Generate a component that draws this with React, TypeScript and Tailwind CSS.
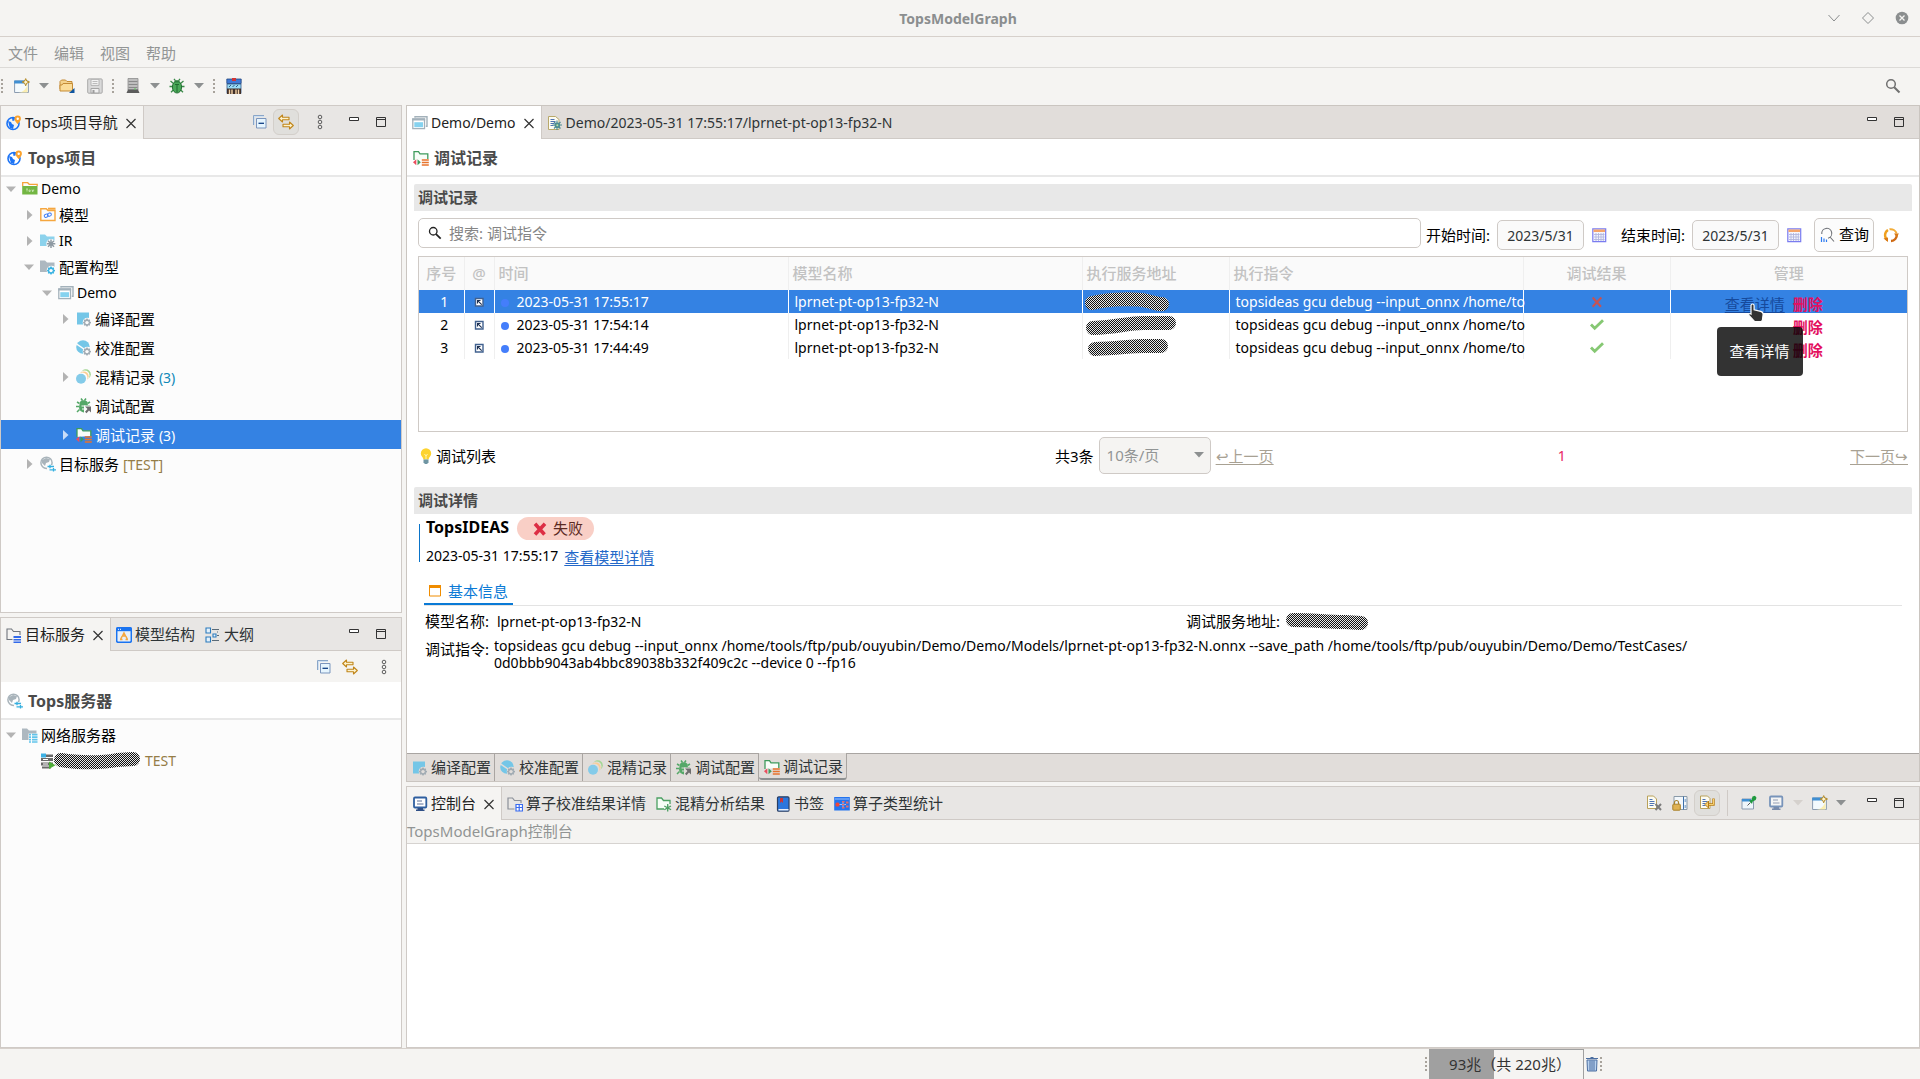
import type { ReactNode } from 'react';
import clsx from 'clsx';

type IconProps = { children?: ReactNode; className?: string };

function Icon({ children, className = 'w-4 h-4' }: IconProps) {
  return (
    <svg viewBox="0 0 16 16" fill="none" className={clsx('shrink-0', className)} aria-hidden="true">
      {children}
    </svg>
  );
}

/* ---------- small shared glyphs ---------- */

const gearPath =
  'M11 6.6l.5 1.2 1.2-.5.9.9-.5 1.2 1.3.5v1.3l-1.3.5.5 1.2-.9.9-1.2-.5-.5 1.2h-1.2l-.5-1.2-1.2.5-.9-.9.5-1.2-1.2-.5V9.900l1.200-.5-.5-1.200.9-.9 1.200.5.5-1.200z';

const Gear = ({ color, hole = '#fcfcfc' }: { color: string; hole?: string }) => (
  <g>
    <path d={gearPath} fill={color} transform="translate(0.6 1)" />
    <circle cx="11" cy="11.600" r="1.700" fill={hole} />
  </g>
);

const GlobeIcon = () => (
  <Icon>
    <circle cx="7" cy="8.500" r="6" stroke="#1d74f5" strokeWidth="1.600" />
    <path d="M2 6l3 1 1 2 2 1-1 4-3-1-1-3zM6 3l3-.5-.5 3L6.500 6z" fill="#1d74f5" />
    <path d="M11.700 0.500a3.200 3.200 0 0 1 3.200 3.200c0 2.300-3.200 5.300-3.200 5.300S8.500 6 8.500 3.700a3.200 3.200 0 0 1 3.200-3.200z" fill="#fba22c" />
    <circle cx="11.700" cy="3.700" r="1.200" fill="#fff" />
  </Icon>
);

const GlobeLinkIcon = () => (
  <Icon>
    <circle cx="6.500" cy="6.800" r="5.600" stroke="#a9b4bb" strokeWidth="1.500" />
    <path d="M2 4l4-2 4 1-1 3-3 1-1 3-3-3z" fill="#a9b4bb" />
    <path d="M7 9h9v7H7z" fill="#fcfcfc" />
    <path d="M7.500 10.500H14M10 8.800v3.400M9.500 13.800H16M13.500 12v3.600" stroke="#35b0e0" strokeWidth="1.300" />
  </Icon>
);

const TopsFolderIcon = () => (
  <Icon>
    <path d="M.7 5V1.700h5l1.500 1.600h8V5" stroke="#f5a33a" strokeWidth="1.300" />
    <path d="M.2 5h15.300v8.500H.2z" fill="#73b643" />
    <path d="M4 8h2M5 8v2.500M7 9h1.200v1.500H7zM9.500 9h1v2M12.200 9h-1v1.500" stroke="#d6ecc6" strokeWidth=".7" />
  </Icon>
);

const ModelFolderIcon = () => (
  <Icon>
    <path d="M.8 13.500V1.700h5.500L8 3.500h7V13.500z" stroke="#f5a63e" strokeWidth="1.400" />
    <path d="M8 .7h7.500v2H8z" fill="#f5a63e" />
    <rect x="4.300" y="7.300" width="4" height="3" rx="1.500" stroke="#3f7df5" transform="rotate(-20 6 9)" />
    <rect x="7.500" y="6.300" width="4" height="3" rx="1.500" stroke="#3f7df5" transform="rotate(-20 9 8)" />
  </Icon>
);

const IrFolderIcon = () => (
  <Icon>
    <path d="M0 1.500h5l2 2h7.500V13H0z" fill="#8cd2ec" />
    <circle cx="11" cy="10.800" r="4.800" fill="#fcfcfc" />
    <path d="M11 6.500v8.600M6.800 10.800h8.500M8 7.800l6 6M14 7.800l-6 6" stroke="#8f9aa3" strokeWidth="1.500" />
  </Icon>
);

const ConfigFolderIcon = () => (
  <Icon>
    <path d="M0 1.500h5l2 2h7.500V13H0z" fill="#adb8c0" />
    <circle cx="11.500" cy="11.500" r="4.800" fill="#fcfcfc" />
    <Gear color="#3ab3e2" />
  </Icon>
);

const WindowsIcon = () => (
  <Icon>
    <path d="M3 2.800V1.800h12v9.500h-1.200" stroke="#a3b1ba" strokeWidth="1.400" />
    <path d="M.8 4h11.700v9.700H.8z" fill="#fff" stroke="#a3b1ba" strokeWidth="1.300" />
    <path d="M.2 3.500h13v2H.2z" fill="#a3b1ba" />
    <path d="M2.300 7.200h8.700v5H2.300z" fill="#85d2ef" />
  </Icon>
);

const CompileIcon = ({ halo = '#fcfcfc' }: { halo?: string }) => (
  <Icon>
    <path d="M1 1.500h12v12H1z" fill="#74c6e7" />
    <circle cx="11.500" cy="11.500" r="4.800" fill={halo} />
    <Gear color="#a0abb3" hole={halo} />
  </Icon>
);

const CalibIcon = ({ halo = '#fcfcfc' }: { halo?: string }) => (
  <Icon>
    <circle cx="7" cy="7" r="6.800" fill="#74c6e7" />
    <path d="M0 3.500l13 9" stroke={halo} strokeWidth="1.500" />
    <circle cx="11.500" cy="11.500" r="4.800" fill={halo} />
    <Gear color="#a0abb3" hole={halo} />
  </Icon>
);

const MixIcon = ({ halo = '#fcfcfc' }: { halo?: string }) => (
  <Icon>
    <circle cx="9.800" cy="5.200" r="5" fill="#a3d694" />
    <circle cx="8.500" cy="6.400" r="5" fill={halo} />
    <circle cx="7.800" cy="7.200" r="4.800" fill="#fbcd92" />
    <circle cx="6.300" cy="8.800" r="5.200" fill={halo} />
    <circle cx="5" cy="9.800" r="5" fill="#84cbe9" />
  </Icon>
);

const DebugIcon = ({ halo = '#fcfcfc' }: { halo?: string }) => (
  <Icon>
    <path d="M5 .5l1.500 2M10 .5L8.500 2.500M1 4l2.500 1.500M14 4l-2.500 1.500M0 8.500h3M1 14l2.500-2.500M12 8h2" stroke="#55a868" strokeWidth="1.500" />
    <path d="M4 4c1-2.500 6-2.500 7.500 0L12 8v2l-3 4.500C5 14.500 3 12 3 9z" fill="#55a868" />
    <path d="M5.500 8h4M6 11h3" stroke={halo} />
    <path d="M8 7.500h8V16H8z" fill={halo} />
    <path d="M9 8.500h6v6l-2-2-2.500 2.800-1.500-1.500 2.500-2.800z" fill="#6e6e6e" />
  </Icon>
);

const RecordIcon = () => (
  <Icon>
    <path d="M1 10V1.700h4.500L7 3.800h7.800V9z" fill="#f8fdf8" />
    <path d="M1 10V1.700h4.500L7 3.800h7.800V9" stroke="#3f9b5c" strokeWidth="1.300" />
    <path d="M0 12.300l3.300-3v6z" fill="#ea4d5e" />
    <path d="M4.500 9.300l3.300 3-3.300 3z" fill="#3f9b5c" />
    <path d="M8.800 10h7M8.800 12.500h7M8.800 15h7" stroke="#e8732c" strokeWidth="1.300" />
  </Icon>
);

const ServerFolderIcon = () => (
  <Icon>
    <path d="M0 1.500h5l2 2h7.500V13H0z" fill="#adb8c0" />
    <path d="M6.500 6.500H16V16H6.500z" fill="#fcfcfc" />
    <path d="M7 7.700h2m1 0h5.500M7 10.200h2m1 0h5.500M7 12.700h2m1 0h5.500M7 15h2m1 0h5.500" stroke="#62c3ea" strokeWidth="1.700" />
  </Icon>
);

const RunningServerIcon = () => (
  <Icon>
    <path d="M1 5h12v3H1zM1 9.500h12v3H1zM2 13.500h9v2H2zM6 1.500h7V4H6z" fill="#6a6a6a" />
    <path d="M3 6.500h5M3 11h5" stroke="#fff" />
    <path d="M1 .5h5v4H1z" fill="#3db1e4" />
    <path d="M9 8.500l6.500 3.800L9 16z" fill="#4fae3a" />
  </Icon>
);

const TargetTabIcon = () => (
  <Icon>
    <path d="M6.500 12.500H1V2h4.500l2 2.500H14V8" stroke="#70757d" strokeWidth="1.100" />
    <path d="M7.500 9H15v2H7.500zM7.500 12H15v1.500H7.500zM7.500 14.500H15V16H7.500z" fill="#3269ea" />
  </Icon>
);

const ModelTabIcon = () => (
  <Icon>
    <rect x=".7" y=".7" width="14.600" height="14.600" rx="1.500" fill="#e8f0fa" stroke="#1a73f0" strokeWidth="1.500" />
    <path d="M.5.5h15v3.700H.5z" fill="#1a73f0" />
    <path d="M2 2.300h1M4 2.300h1" stroke="#fff" />
    <path d="M8 6l1.500 3h-3zM4.500 12.500l1.500-3M11.500 12.500l-1.500-3M4 12.500h2.500M9.500 12.500H12" stroke="#f5a63e" strokeWidth="1.500" />
  </Icon>
);

const OutlineIcon = () => (
  <Icon>
    <path d="M1 1h4.500v5H1zM1 10h4.500v5H1zM8 7h3v3H8z" fill="#e4f1fb" stroke="#2b7bbd" strokeWidth="1.100" />
    <path d="M7 2.500h7M12 8.500h2M7 13.500h7M12 5h1" stroke="#5a6b78" />
  </Icon>
);

const CollapseIcon = () => (
  <Icon>
    <path d="M1.500 11V1.500H12" stroke="#8aa6c8" />
    <path d="M2 2h10v1H3v8H2z" fill="#cfe0f2" />
    <path d="M4.500 4.500h9.500v9.500H4.500z" fill="#e6f5fe" stroke="#7b95bd" />
    <path d="M6.500 9.300h5.500" stroke="#0f3f85" strokeWidth="1.300" />
  </Icon>
);

const LinkArrowsIcon = () => (
  <Icon>
    <path d="M4.500 1L.7 4.500l3.800 3.500V5.800h6.500V3.200H4.500z" fill="#fdf2cd" stroke="#c08519" strokeWidth="1.100" strokeLinejoin="round" />
    <path d="M11.500 8l3.800 3.500-3.800 3.500v-2.200H5V10.200h6.500z" fill="#fdf2cd" stroke="#c08519" strokeWidth="1.100" strokeLinejoin="round" />
  </Icon>
);

const ViewMenuIcon = () => (
  <Icon>
    <g stroke="#5c5c5c">
      <circle cx="8" cy="3" r="1.800" />
      <circle cx="8" cy="8" r="1.800" />
      <circle cx="8" cy="13" r="1.800" />
    </g>
  </Icon>
);

const MinimizeIcon = () => (
  <Icon>
    <path d="M3.500 3.500h9v3h-9z" fill="#fff" stroke="#333" />
  </Icon>
);

const MaximizeIcon = () => (
  <Icon>
    <path d="M3.500 3.500h9v9h-9zM3.500 5.500h9" stroke="#333" />
  </Icon>
);

const CloseX = () => (
  <Icon>
    <path d="M3.500 4l9 9M12.500 4l-9 9" stroke="#333" strokeWidth="1.200" />
  </Icon>
);

const NewWindowIcon = () => (
  <Icon>
    <path d="M.6 3h13.800v11.500H.6z" fill="#f4fafd" stroke="#8a9bb0" />
    <path d="M.2 2.500h12v3H.2z" fill="#3f8fd2" />
    <path d="M13.500 6v8.500H4c5 0 8-3 9.500-8.500z" fill="#fbeeb0" />
    <path d="M11.700.6l1 2.400 2.800 1-2.800 1.200-1 2.600-1-2.600-2.500-1.200 2.500-1z" fill="#fff6d0" stroke="#b48a26" />
  </Icon>
);

const OpenFolderIcon = () => (
  <Icon>
    <path d="M1 11V3.500L2.500 2h4L8 3.500h5V12" fill="#f4d28c" stroke="#c48b35" />
    <path d="M1 13V7h2l1-1.500h9.500V13z" fill="#fbdc98" stroke="#c48b35" strokeLinejoin="round" />
    <path d="M15.500 10V15h-5.500z" fill="#0f55a0" />
  </Icon>
);

const SaveIcon = () => (
  <Icon>
    <rect x=".7" y=".9" width="14.500" height="14.300" rx="1" fill="#d9d9d9" stroke="#a9a9a9" />
    <path d="M4 1.400h8v6H4z" fill="#f3f3f3" stroke="#b4b4b4" />
    <path d="M5.500 3.500h5M5.500 5.500h5" stroke="#bcbcbc" />
    <path d="M4 10.500h8V15H4z" fill="#f0f0f0" stroke="#a4a4a4" />
    <path d="M5.500 12h2v3h-2z" fill="#9d9d9d" />
  </Icon>
);

const ServerIcon = () => (
  <Icon>
    <path d="M3 .5h10V12H3z" fill="#bdbdbd" stroke="#8e8e8e" strokeWidth=".8" />
    <path d="M3.500 3.500h9M3.500 6.500h9M3.500 9.500h9" stroke="#8a8a8a" />
    <path d="M3 11.500h10l1.500 3.500h-13z" fill="#5c5c5c" />
    <path d="M9 10.500h2v1H9z" fill="#5cc95c" />
  </Icon>
);

const BugIcon = () => (
  <Icon>
    <path d="M5 .8l1.500 2M11 .8L9.500 2.800M1.500 3l3 2.500M14.500 3l-3 2.500M.5 8.500h3.500M15.500 8.500H12M2 14.200l3-3M14 14.200l-3-3" stroke="#3b8a49" strokeWidth="1.300" />
    <ellipse cx="8" cy="9" rx="4.600" ry="6" fill="#49a858" stroke="#256f35" />
    <path d="M5 4.500c1-3 5-3 6 0z" fill="#2e7f3e" />
    <path d="M8 7v7M6 6.500h4" stroke="#1f6a2f" />
  </Icon>
);

const ShopIcon = () => (
  <Icon>
    <path d="M1 6h14v9.500H1z" fill="#9adcf5" stroke="#31588a" strokeWidth=".8" />
    <path d="M.8 1h14.400v4.500H.8z" fill="#3f79d6" stroke="#24477f" strokeWidth=".8" />
    <path d="M6 0h4v3H6z" fill="#d03535" />
    <path d="M3 9l2-2M6.500 9l2-2M10 9l2-2" stroke="#2d5f8a" />
    <path d="M1 10.500h14V16H1z" fill="#40302a" />
    <path d="M3.500 11.500V16M6 11.500V16M10 11.500V16M12.500 11.500V16" stroke="#f6d3a8" strokeWidth="1.400" />
  </Icon>
);

const MagnifierIcon = ({ className }: { className?: string }) => (
  <Icon className={className}>
    <circle cx="6" cy="6" r="4.300" stroke="currentColor" strokeWidth="1.500" />
    <path d="M9.200 9.200l5.300 5.300" stroke="currentColor" strokeWidth="2" />
  </Icon>
);

const DocGearIcon = () => (
  <Icon>
    <path d="M1.500 1.500h7l3.500 3v10h-10.500z" fill="#fdfcf2" stroke="#b9a96b" />
    <path d="M3.500 4.500h4M3.500 6.500h5M3.500 8.500h4M3.500 10.500h3" stroke="#4f74b3" />
    <path d="M10 5.500v9.500M5.500 10h9.500M7 7l6.500 6.500M13.500 7L7 13.500" stroke="#4f8d92" strokeWidth="1.200" />
    <circle cx="10.300" cy="10.200" r="2.800" fill="#4f8d92" />
    <circle cx="10.300" cy="10.200" r="1" fill="#b6e3a0" />
  </Icon>
);

const CalendarIcon = () => (
  <Icon>
    <path d="M1.800 1.800h12.900v12.900H1.800z" fill="#f5f6ff" stroke="#7a7cf0" strokeWidth="1.200" />
    <path d="M2.500 2.500h11.500V5H2.500z" fill="#f6a56a" />
    <path d="M3 7.500h10.500M3 10h10.500M3 12.500h10.500M5 6v8M7.500 6v8M10 6v8M12.300 6v8" stroke="#b3b7de" strokeWidth=".9" />
  </Icon>
);

const QueryIcon = () => (
  <Icon>
    <path d="M2.800 7A5 5 0 1 1 9 11.200M11 10l4 4.500" stroke="#6d7076" strokeWidth="1.100" />
    <path d="M2.500 10v5M5 11.500V15M7.500 12.500V15" stroke="#2e7bf0" strokeWidth="1.200" />
  </Icon>
);

const RefreshIcon = () => (
  <Icon>
    <path d="M4.500 13A6 6 0 0 1 5 3" stroke="#f0a01e" strokeWidth="2.400" />
    <path d="M6.500 2.300A6 6 0 0 1 13.600 6.500" stroke="#f2ad3a" strokeWidth="2" />
    <path d="M13.800 7.500A6 6 0 0 1 8 14" stroke="#cf6a14" strokeWidth="2.400" />
    <path d="M11 6.500h5L13.600 10zM.5 11.500L5 10.500v4.500z" fill="#d97a16" />
  </Icon>
);

const PinMarkIcon = () => (
  <Icon className="mx-auto h-4 w-4">
    <path d="M4.500 4.500h7.500v7.500H4.500z" fill="#fff" stroke="#41618f" strokeWidth="1.400" />
    <path d="M6.500 9.500V6.500h3M6.700 6.700l4 4" stroke="#1c2f50" strokeWidth="1.100" />
  </Icon>
);

const BulbIcon = () => (
  <Icon>
    <path d="M8 .3a5.200 5.200 0 0 1 5.200 5.200c0 2.500-2.200 3.500-2.700 6h-5c-.5-2.500-2.700-3.500-2.700-6A5.200 5.200 0 0 1 8 .3z" fill="#fdd32f" />
    <path d="M6.500 6l1.500 2 1.500-2M8 8v3.500" stroke="#fff3b0" />
    <path d="M5.500 11.500h5v3L9 16H7l-1.500-1.500z" fill="#6f95a3" />
  </Icon>
);

const CrossIcon = ({ color, className, weight = 2.4 }: { color: string; className?: string; weight?: number }) => (
  <Icon className={className}>
    <path d="M3 2.800l9.500 10.700M13 2.800L3 13.500" stroke={color} strokeWidth={weight} />
  </Icon>
);

const CheckIcon = () => (
  <Icon className="mx-auto h-4 w-4">
    <path d="M2 7.500l3.700 3.800L14 3.300" stroke="#86c873" strokeWidth="2.800" />
  </Icon>
);

const InfoWindowIcon = () => (
  <Icon>
    <path d="M2.500 2.500h11v10.500h-11z" stroke="#f08c00" />
    <path d="M2 2h12v3H2z" fill="#f08c00" />
  </Icon>
);

const ConsoleIcon = ({ faded = false }: { faded?: boolean }) => (
  <Icon className={faded ? 'h-4 w-4 opacity-60' : 'h-4 w-4'}>
    <rect x="2" y="1.500" width="12.300" height="10" rx="1" fill="#fff" stroke="#2f5f9f" strokeWidth="1.800" />
    <path d="M5 5h5M5 8h6.500" stroke="#5a6f96" />
    <path d="M5.500 12h5.500v1.500h1.500V15H4v-1.500h1.500z" fill="#2f4f86" />
  </Icon>
);

const ResultFolderIcon = () => (
  <Icon>
    <path d="M7.500 13H1V2h4.500l2 2.500H14V7" stroke="#8a8f98" strokeWidth="1.200" />
    <path d="M9 8.500h6.500V15H9zM9 11.500h6.500M12.200 8.500V15" fill="#fff" stroke="#3a6cf0" strokeWidth="1.200" />
  </Icon>
);

const AnalysisFolderIcon = () => (
  <Icon>
    <path d="M8 13H1V2h4.500l2 2.500H14V8" fill="#f5fdf6" stroke="#4ba062" strokeWidth="1.300" />
    <path d="M11.700 8v7.500M8.300 10l6.800 3.700M15 10l-6.700 3.700" stroke="#4ba062" strokeWidth="1.300" />
  </Icon>
);

const BookmarkIcon = () => (
  <Icon>
    <rect x="2.500" y=".8" width="11.500" height="14.400" rx="1.300" fill="#2b76dc" stroke="#2b3f63" strokeWidth="1.200" />
    <path d="M3.500 13h10v1.500h-10z" fill="#e9eef5" />
    <path d="M5 2h3v5L6.500 5.500 5 7z" fill="#c93737" />
  </Icon>
);

const StatsIcon = () => (
  <Icon>
    <path d="M.2 1h15.600v13.500H.2z" fill="#2474ee" />
    <path d="M1 3h14" stroke="#bcd7ff" strokeWidth=".8" />
    <path d="M5 8.500h7M9 5.500v6" stroke="#bcd7ff" strokeWidth=".8" />
    <rect x="1.500" y="6.500" width="4" height="4" rx="1.500" fill="#f04438" />
    <path d="M8 5h2.500v1.500H8zM12 5.500h2.500v2H12zM8 8h2.500v1.500H8zM12 9.500h2.500v2H12zM8 11h2.500v1.500H8z" fill="#e86a66" />
  </Icon>
);

const ClearConsoleIcon = () => (
  <Icon>
    <path d="M1.500 1h6l3 3v9.500h-9z" fill="#fdfcf2" stroke="#b9a15a" />
    <path d="M3.500 4.500h3M3.500 6.500h5M3.500 8.500h5M3.500 10.500h4" stroke="#4f74b3" />
    <path d="M9.500 9l5.500 6M15 9l-5.500 6" stroke="#7c7c7c" strokeWidth="2" />
  </Icon>
);

const LockIcon = () => (
  <Icon>
    <path d="M2 1.500h13v13H2z" fill="#f2f7fb" stroke="#8a9aa8" />
    <path d="M11.500 1.500v13" stroke="#3b6ea8" />
    <path d="M12.500 4h2v3h-2zM12.500 10h2v3h-2z" fill="#9ab7d5" />
    <path d="M2.500 9.500V7.500a2 2 0 0 1 4 0v2" stroke="#a8812b" strokeWidth="1.200" />
    <rect x=".8" y="9.200" width="7.500" height="6" rx=".8" fill="#e0b252" stroke="#a8812b" />
  </Icon>
);

const WrapIcon = () => (
  <Icon>
    <path d="M1.500 1h7l2.500 2.500v10h-9.500z" fill="#fdfcf2" stroke="#b9a15a" />
    <path d="M3.500 4.500h3M3.500 6.500h5M3.500 8.500h3M3.500 10.500h3" stroke="#4f74b3" />
    <path d="M14.500 3.500v6H9" stroke="#b87d13" strokeWidth="2.400" />
    <path d="M14.500 4v5.500H9" stroke="#f7d071" />
    <path d="M9.500 6v7L6 9.500z" fill="#f7d071" stroke="#b87d13" />
  </Icon>
);

const PinConsoleIcon = () => (
  <Icon>
    <path d="M1 4h11.500v10H1z" fill="#eef6fb" stroke="#8a9bb0" />
    <path d="M1 4h9v2.500H1z" fill="#3f8fd2" />
    <path d="M6.500 10.500l3-3" stroke="#555" />
    <path d="M8 5.500l2.500-.5 1-3.500L14 .8l1.500 2-.8 2.200-3 1.500-.7 2.500z" fill="#1f9a3e" />
  </Icon>
);

const TrashIcon = () => (
  <Icon>
    <path d="M2 2.500h12M6.500 1.500h3" stroke="#4a6da0" strokeWidth="1.200" />
    <path d="M3 4h10l-.5 11h-9z" fill="#b9d2ef" stroke="#4a6da0" />
    <path d="M6 4.500v10M8 4.500v10M10 4.500v10" stroke="#4a6da0" />
  </Icon>
);

const HandCursor = () => (
  <svg viewBox="0 0 18 20" className="pointer-events-none absolute left-[76px] top-[12px] z-20 h-5 w-[18px]" aria-hidden="true">
    <path
      d="M5.500 1c1.200 0 1.600.8 1.600 1.800v4l6.500 1.500c1.800.5 2.700 1.500 2.500 3.200l-.7 5.500-1 1.500H7.500L2 12.500c-1-1.200.5-2.600 2-1.500V2.800C4 1.800 4.300 1 5.500 1z"
      fill="#333"
      stroke="#fff"
      strokeWidth="1.200"
    />
  </svg>
);

const Caret = ({ light = false }: { light?: boolean }) => (
  <svg viewBox="0 0 10 6" className="h-[6px] w-[10px] shrink-0" aria-hidden="true">
    <path d="M0 0h10L5 5.500z" fill={light ? '#d5d1cd' : '#8d9091'} />
  </svg>
);

const Grip = () => (
  <svg viewBox="0 0 2 14" className="h-[14px] w-[2px] shrink-0" aria-hidden="true">
    <path d="M1 0v14" stroke="#a8a39c" strokeWidth="2" strokeDasharray="2 2" />
  </svg>
);

/* Hidden addresses are scribbled over with a checkered brush stroke */
function Scribble({ d, width }: { d: string; width: number }) {
  return (
    <svg width={width} height="22" viewBox={`0 0 ${width} 22`} className="shrink-0" aria-hidden="true">
      <path d={d} fill="none" stroke="url(#checker)" strokeWidth="14" strokeLinecap="round" strokeLinejoin="round" />
    </svg>
  );
}

function ToolButton({ label, children, className }: { label: string; children: ReactNode; className?: string }) {
  return (
    <button type="button" aria-label={label} title={label} className={clsx('flex shrink-0 items-center justify-center', className)}>
      {children}
    </button>
  );
}

function PaneControls() {
  return (
    <div className="ml-[18px] mr-3 flex gap-[11px]">
      <ToolButton label="最小化">
        <MinimizeIcon />
      </ToolButton>
      <ToolButton label="最大化">
        <MaximizeIcon />
      </ToolButton>
    </div>
  );
}

type TabProps = { icon: ReactNode; label: string; active?: boolean; latin?: boolean; activeBg?: string };

function Tab({ icon, label, active = false, latin = false, activeBg = 'bg-[#f5f4f2]' }: TabProps) {
  return (
    <div
      className={clsx(
        'flex shrink-0 items-center pl-[5px]',
        active ? clsx('h-[33px] border-r border-[#cfcac6] pr-1', activeBg) : 'h-[33px] pr-[5px]',
      )}
    >
      <button
        type="button"
        className={clsx('flex items-center gap-[3px] whitespace-nowrap', latin ? 'text-[14px]' : 'text-[15px]', active ? 'text-[#222]' : 'text-[#2e3436]')}
      >
        {icon}
        {label}
      </button>
      {active && (
        <ToolButton label="关闭" className="ml-[5px]">
          <CloseX />
        </ToolButton>
      )}
    </div>
  );
}

function TabStrip({ children, tools, dark = false }: { children: ReactNode; tools?: ReactNode; dark?: boolean }) {
  return (
    <div className={clsx('flex h-[33px] shrink-0', dark ? 'bg-[#e1ddda]' : 'bg-[#e8e6e4]')}>
      <div className="flex flex-1 border-b border-[#cfcac6]">
        <div className="-mb-px flex">{children}</div>
        <div className="flex flex-1 items-center justify-end">
          {tools}
          <PaneControls />
        </div>
      </div>
    </div>
  );
}

function ViewTitle({ icon, children }: { icon: ReactNode; children: ReactNode }) {
  return (
    <div className="flex h-[38px] shrink-0 items-center gap-[5px] border-b-2 border-[#e8e8e8] bg-white pl-[6px] pt-[2px] text-[16px] font-bold text-[#4a4a4a]">
      {icon}
      <h2>{children}</h2>
    </div>
  );
}

/* ---------- left side ---------- */

type Node = {
  icon: ReactNode;
  label: ReactNode;
  indent: string;
  state?: 'open' | 'closed';
  latin?: boolean;
  selected?: boolean;
};

function TreeRow({ node }: { node: Node }) {
  return (
    <li
      className={clsx(
        'flex items-center',
        node.indent,
        node.latin ? 'h-[23px] text-[14px]' : 'h-[29px] pt-px text-[15px]',
        node.selected ? 'bg-[#3482e3] text-white' : 'text-black',
      )}
    >
      <svg viewBox="0 0 12 12" className={clsx('mr-[5px] h-3 w-3 shrink-0', node.selected ? 'text-[#c9ddf8]' : 'text-[#b3b3b3]')} aria-hidden="true">
        {node.state === 'open' && <path d="M1 3.500h10L6 9z" fill="currentColor" />}
        {node.state === 'closed' && <path d="M4 1l5.500 5L4 11z" fill="currentColor" />}
      </svg>
      {node.icon}
      <span className="ml-[3px] whitespace-pre">{node.label}</span>
    </li>
  );
}

const projectTree: Node[] = [
  { icon: <TopsFolderIcon />, label: 'Demo', indent: 'pl-1', state: 'open', latin: true },
  { icon: <ModelFolderIcon />, label: '模型', indent: 'pl-[22px]', state: 'closed' },
  { icon: <IrFolderIcon />, label: 'IR', indent: 'pl-[22px]', state: 'closed', latin: true },
  { icon: <ConfigFolderIcon />, label: '配置构型', indent: 'pl-[22px]', state: 'open' },
  { icon: <WindowsIcon />, label: 'Demo', indent: 'pl-10', state: 'open', latin: true },
  { icon: <CompileIcon />, label: '编译配置', indent: 'pl-[58px]', state: 'closed' },
  { icon: <CalibIcon />, label: '校准配置', indent: 'pl-[58px]' },
  {
    icon: <MixIcon />,
    label: (
      <>
        混精记录 <span className="text-[14px] text-[#0f88b8]">(3)</span>
      </>
    ),
    indent: 'pl-[58px]',
    state: 'closed',
  },
  { icon: <DebugIcon />, label: '调试配置', indent: 'pl-[58px]' },
  {
    icon: <RecordIcon />,
    label: (
      <>
        调试记录 <span className="text-[14px]">(3)</span>
      </>
    ),
    indent: 'pl-[58px]',
    state: 'closed',
    selected: true,
  },
  {
    icon: <GlobeLinkIcon />,
    label: (
      <>
        目标服务 <span className="text-[14px] text-[#957d47]">[TEST]</span>
      </>
    ),
    indent: 'pl-[22px]',
    state: 'closed',
  },
];

function ProjectPane() {
  return (
    <section className="flex flex-col border border-[#cfcac6] bg-[#fcfcfc]">
      <TabStrip
        tools={
          <>
            <ToolButton label="全部折叠" className="mr-[5px]">
              <CollapseIcon />
            </ToolButton>
            <ToolButton label="与编辑器链接" className="mr-[13px] h-[26px] w-[26px] rounded-md border border-[#d3cfca] bg-[#e0dfdc]">
              <LinkArrowsIcon />
            </ToolButton>
            <ToolButton label="视图菜单">
              <ViewMenuIcon />
            </ToolButton>
          </>
        }
      >
        <Tab icon={<GlobeIcon />} label="Tops项目导航" active />
      </TabStrip>
      <ViewTitle icon={<GlobeIcon />}>Tops项目</ViewTitle>
      <ul>
        {projectTree.map((node, i) => (
          <TreeRow key={i} node={node} />
        ))}
      </ul>
    </section>
  );
}

function ServerPane() {
  return (
    <section className="flex flex-col border border-[#cfcac6] bg-[#fcfcfc]">
      <TabStrip>
        <Tab icon={<TargetTabIcon />} label="目标服务" active />
        <Tab icon={<ModelTabIcon />} label="模型结构" />
        <Tab icon={<OutlineIcon />} label="大纲" />
      </TabStrip>
      <div className="flex h-[31px] shrink-0 items-center justify-end bg-[#f5f4f2] pr-[9px]">
        <ToolButton label="全部折叠" className="mr-[10px]">
          <CollapseIcon />
        </ToolButton>
        <ToolButton label="与编辑器链接" className="mr-[18px]">
          <LinkArrowsIcon />
        </ToolButton>
        <ToolButton label="视图菜单">
          <ViewMenuIcon />
        </ToolButton>
      </div>
      <ViewTitle icon={<GlobeLinkIcon />}>Tops服务器</ViewTitle>
      <ul>
        <TreeRow node={{ icon: <ServerFolderIcon />, label: '网络服务器', indent: 'pl-1', state: 'open' }} />
        <TreeRow
          node={{
            icon: <RunningServerIcon />,
            label: (
              <span className="-ml-[6px] flex items-center gap-1">
                <Scribble width={88} d="M8 10C25 13 50 13 64 10L80 9" />
                <span className="text-[#957d47]">TEST</span>
              </span>
            ),
            indent: 'pl-[22px]',
            latin: true,
          }}
        />
      </ul>
    </section>
  );
}

/* ---------- debug record editor ---------- */

const records = [
  { no: 1, time: '2023-05-31 17:55:17', ok: false, mark: 'M9 12C30 7 55 8 64 10C73 12 76 14 79 13' },
  { no: 2, time: '2023-05-31 17:54:14', ok: true, mark: 'M10 14C35 13 45 9 60 9L86 9' },
  { no: 3, time: '2023-05-31 17:44:49', ok: true, mark: 'M12 12C35 11 50 9 60 9L78 9' },
];

const headers = [
  { label: '序号', align: 'text-center' },
  { label: '@', align: 'text-center' },
  { label: '时间', align: 'pl-1 text-left' },
  { label: '模型名称', align: 'pl-1 text-left' },
  { label: '执行服务地址', align: 'pl-1 text-left' },
  { label: '执行指令', align: 'pl-1 text-left' },
  { label: '调试结果', align: 'text-center' },
  { label: '管理', align: 'text-center' },
];

function RecordTable() {
  return (
    <div className="mx-[11px] mt-[5px] h-[176px] border border-[#cfcac6] bg-white">
      <table className="w-full table-fixed border-collapse">
        <colgroup>
          <col className="w-[45px]" />
          <col className="w-[30px]" />
          <col className="w-[294px]" />
          <col className="w-[294px]" />
          <col className="w-[147px]" />
          <col className="w-[294px]" />
          <col className="w-[147px]" />
          <col />
        </colgroup>
        <thead>
          <tr className="h-[33px] bg-[#fafafa] text-[15px] text-[#c2c2c2]">
            {headers.map((h) => (
              <th key={h.label} className={clsx('border-r border-[#efefef] p-0 font-medium last:border-r-0', h.align)}>
                {h.label}
              </th>
            ))}
          </tr>
        </thead>
        <tbody>
          {records.map((r) => {
            const selected = r.no === 1;
            const cell = clsx('border-r p-0', selected ? 'border-white' : 'border-[#efefef]');
            return (
              <tr key={r.no} className={clsx('h-[23px] text-[14px] leading-[22px]', selected ? 'bg-[#3482e3] text-white' : 'text-black')}>
                <td className={clsx(cell, 'pl-[6px] text-center')}>{r.no}</td>
                <td className={cell}>
                  <PinMarkIcon />
                </td>
                <td className={cell}>
                  <span className="ml-[6px] mr-2 inline-block h-2 w-2 rounded-full bg-[#447efb]" />
                  {r.time}
                </td>
                <td className={clsx(cell, 'pl-[6px]')}>lprnet-pt-op13-fp32-N</td>
                <td className={cell}>
                  <div className="h-[22px]">
                    <Scribble width={96} d={r.mark} />
                  </div>
                </td>
                <td className={clsx(cell, 'whitespace-nowrap pl-[6px]')}>topsideas gcu debug --input_onnx /home/to</td>
                <td className={cell}>{r.ok ? <CheckIcon /> : <CrossIcon color="#c65353" className="mx-auto h-[14px] w-[14px]" />}</td>
                <td className="p-0">
                  <div className="relative flex h-[22px] items-center justify-center pr-[30px] pt-1 text-[15px]">
                    <div className="flex w-[98px] justify-end gap-2">
                      {selected && (
                        <a href="#detail" className="whitespace-nowrap text-[#164a9c] underline underline-offset-2">
                          查看详情
                        </a>
                      )}
                      <a href="#delete" className="whitespace-nowrap font-bold text-[#e3105f]">
                        删除
                      </a>
                    </div>
                    {selected && (
                      <>
                        <HandCursor />
                        <div
                          role="tooltip"
                          className="absolute left-[46px] top-[36px] z-10 flex h-[49px] w-[86px] items-center justify-center rounded-[4px] bg-black/80 text-[15px] text-white"
                        >
                          查看详情
                        </div>
                      </>
                    )}
                  </div>
                </td>
              </tr>
            );
          })}
        </tbody>
      </table>
    </div>
  );
}

function SectionBar({ children }: { children: ReactNode }) {
  return <h3 className="mx-[7px] flex h-[27px] items-center rounded-t-[2px] bg-[#e8e8e8] pl-1 text-[15px] font-bold text-[#4a4a4a]">{children}</h3>;
}

function DateField({ id, label }: { id: string; label: string }) {
  return (
    <div className="flex items-center">
      <label htmlFor={id} className="mr-[6px] w-[65px] whitespace-nowrap">
        {label}
      </label>
      <input
        id={id}
        type="text"
        defaultValue="2023/5/31"
        className="h-[30px] w-[87px] rounded-[5px] border border-[#cfcac6] bg-[#fafafa] text-center text-[14px] text-[#2e3436]"
      />
      <ToolButton label="选择日期" className="ml-[7px]">
        <CalendarIcon />
      </ToolButton>
    </div>
  );
}

function SearchRow() {
  return (
    <div className="mx-[11px] mt-[7px] flex h-[33px] items-center text-[15px] text-black">
      <label className="flex h-[30px] flex-1 items-center gap-[7px] self-start rounded-[5px] border border-[#cfcac6] bg-white pl-[9px] text-[#222]">
        <MagnifierIcon className="h-[14px] w-[14px]" />
        <input type="search" aria-label="搜索" placeholder="搜索: 调试指令" className="h-full flex-1 bg-transparent outline-none placeholder:text-[#858585]" />
      </label>
      <div className="ml-[5px] flex gap-[14px] pt-px">
        <DateField id="start-date" label="开始时间:" />
        <DateField id="end-date" label="结束时间:" />
      </div>
      <button type="button" className="ml-3 flex h-[34px] w-[60px] items-center justify-center gap-1 whitespace-nowrap rounded-[5px] border border-[#cfcac6] bg-[#fcfcfc]">
        <QueryIcon />
        查询
      </button>
      <ToolButton label="刷新" className="ml-[9px] mr-[9px]">
        <RefreshIcon />
      </ToolButton>
    </div>
  );
}

function Pager() {
  return (
    <div className="mx-[11px] mt-[5px] flex h-[37px] items-center text-[15px]">
      <BulbIcon />
      <span className="ml-[2px] pt-px">调试列表</span>
      <div className="ml-[559px] flex flex-1 items-center">
        <label htmlFor="page-size" className="mr-[5px] whitespace-nowrap pt-px">
          共3条
        </label>
        <div className="relative">
          <select
            id="page-size"
            disabled
            className="block h-[37px] w-[112px] appearance-none rounded-[5px] border border-[#cfcac6] bg-[#f5f4f2] pl-[7px] text-[#929595]"
          >
            <option>10条/页</option>
          </select>
          <span className="pointer-events-none absolute right-[7px] top-[15px]">
            <Caret />
          </span>
        </div>
        <a href="#prev" className="ml-[5px] whitespace-nowrap pt-px text-[#a8a193] underline underline-offset-2">
          ↩上一页
        </a>
        <span className="flex-1 text-center text-[14px] text-[#e91e63]">1</span>
        <a href="#next" className="whitespace-nowrap pt-px text-[#a8a193] underline underline-offset-2">
          下一页↪
        </a>
      </div>
    </div>
  );
}

function RecordDetail() {
  return (
    <div className="px-3 text-black">
      <div className="mt-[3px] flex">
        <span className="mt-[7px] h-[38px] w-px bg-[#0a74c9]" />
        <div className="pl-[6px]">
          <div className="flex h-[23px] items-center">
            <strong className="w-[91px] self-start text-[16px] leading-5">TopsIDEAS</strong>
            <span className="flex h-[23px] w-[77px] items-center justify-center gap-[5px] rounded-full bg-[#f9cfc6] pl-1 text-[15px] text-[#5b2a22]">
              <CrossIcon color="#dd2e44" weight={3.6} className="h-4 w-4" />
              失败
            </span>
          </div>
          <div className="mb-[2px] mt-[3px] flex h-[25px] items-center gap-[6px]">
            <span className="text-[14px]">2023-05-31 17:55:17</span>
            <a href="#model" className="pt-1 text-[15px] text-[#2368c9] underline underline-offset-2">
              查看模型详情
            </a>
          </div>
        </div>
      </div>
      <div className="ml-[5px] mr-[5px] mt-[9px] flex border-b border-[#e3e3e3]">
        <button
          type="button"
          className="flex h-[26px] w-[89px] items-center gap-[5px] whitespace-nowrap border-b-2 border-[#0a7ad6] pl-[3px] text-[15px] text-[#0a7ad6]"
        >
          <InfoWindowIcon />
          基本信息
        </button>
      </div>
      <dl className="ml-[6px]">
        <div className="mt-1 flex h-[22px] items-center">
          <div className="flex w-[761px] items-center">
            <dt className="w-[72px] text-[15px]">模型名称:</dt>
            <dd className="text-[14px]">lprnet-pt-op13-fp32-N</dd>
          </div>
          <dt className="w-[99px] whitespace-nowrap text-[15px]">调试服务地址:</dt>
          <dd>
            <Scribble width={96} d="M8 10C30 10 40 12 60 12L76 13" />
          </dd>
        </div>
        <div className="mt-[5px] flex">
          <dt className="w-[69px] pt-px text-[15px]">调试指令:</dt>
          <dd className="text-[14px] leading-[17px]">
            topsideas gcu debug --input_onnx /home/tools/ftp/pub/ouyubin/Demo/Demo/Models/lprnet-pt-op13-fp32-N.onnx --save_path
            /home/tools/ftp/pub/ouyubin/Demo/Demo/TestCases/
            <br />
            0d0bbb9043ab4bbc89038b332f409c2c --device 0 --fp16
          </dd>
        </div>
      </dl>
    </div>
  );
}

const pages = [
  { icon: <CompileIcon halo="#e1ddda" />, label: '编译配置' },
  { icon: <CalibIcon halo="#e1ddda" />, label: '校准配置' },
  { icon: <MixIcon halo="#e1ddda" />, label: '混精记录' },
  { icon: <DebugIcon halo="#e1ddda" />, label: '调试配置' },
  { icon: <RecordIcon />, label: '调试记录' },
];

function EditorPane() {
  return (
    <section className="flex min-w-0 flex-col border border-[#cac5c0] bg-white">
      <TabStrip dark>
        <Tab icon={<WindowsIcon />} label="Demo/Demo" active latin activeBg="bg-white" />
        <Tab icon={<DocGearIcon />} label="Demo/2023-05-31 17:55:17/lprnet-pt-op13-fp32-N" latin />
      </TabStrip>
      <ViewTitle icon={<RecordIcon />}>调试记录</ViewTitle>
      <div className="mt-[7px] flex-1">
        <SectionBar>调试记录</SectionBar>
        <SearchRow />
        <RecordTable />
        <Pager />
        <div className="mt-[13px]">
          <SectionBar>调试详情</SectionBar>
        </div>
        <RecordDetail />
      </div>
      <div className="flex h-[28px] shrink-0 bg-[#e1ddda]">
        {pages.map((p) => {
          const current = p.label === '调试记录';
          return (
            <button
              key={p.label}
              type="button"
              className={clsx(
                'flex w-[88px] items-center gap-[3px] whitespace-nowrap border-r border-r-[#a9a5a2] pl-[5px] text-[15px] text-[#2e3436]',
                current ? 'h-[27px] rounded-b-[3px] border-b-2 border-b-[#8d9091] pt-[2px]' : 'border-t border-t-[#a9a5a2]',
              )}
            >
              {p.icon}
              {p.label}
            </button>
          );
        })}
        <span className="flex-1 border-t border-[#a9a5a2]" />
      </div>
    </section>
  );
}

/* ---------- console ---------- */

function ConsolePane() {
  return (
    <section className="flex min-w-0 flex-col border border-[#cfcac6] bg-white">
      <TabStrip
        tools={
          <>
            <ToolButton label="清除控制台" className="mr-[10px]">
              <ClearConsoleIcon />
            </ToolButton>
            <ToolButton label="滚动锁定" className="mr-[6px]">
              <LockIcon />
            </ToolButton>
            <ToolButton label="自动换行" className="h-[26px] w-[26px] rounded-md border border-[#d3cfca] bg-[#e0dfdc]">
              <WrapIcon />
            </ToolButton>
            <span className="ml-[7px] mr-[13px] h-[26px] w-px bg-[#cfcac6]" />
            <ToolButton label="固定控制台" className="mr-[11px]">
              <PinConsoleIcon />
            </ToolButton>
            <ToolButton label="显示控制台" className="mr-[9px] gap-[9px]">
              <ConsoleIcon faded />
              <Caret light />
            </ToolButton>
            <ToolButton label="打开控制台" className="gap-2">
              <NewWindowIcon />
              <Caret />
            </ToolButton>
          </>
        }
      >
        <Tab icon={<ConsoleIcon />} label="控制台" active />
        <Tab icon={<ResultFolderIcon />} label="算子校准结果详情" />
        <Tab icon={<AnalysisFolderIcon />} label="混精分析结果" />
        <Tab icon={<BookmarkIcon />} label="书签" />
        <Tab icon={<StatsIcon />} label="算子类型统计" />
      </TabStrip>
      <p className="flex h-6 items-center border-b border-[#d6d3d0] bg-[#f5f4f2] text-[15px] text-[#919494]">TopsModelGraph控制台</p>
    </section>
  );
}

/* ---------- window chrome ---------- */

function TitleBar() {
  return (
    <header className="relative flex h-[37px] items-center justify-center border-b border-[#d6d0cb] pr-1">
      <h1 className="text-[14px] font-bold text-[#8b8e8f]">TopsModelGraph</h1>
      <div className="absolute right-[10px] flex gap-[18px] text-[#8b8e8f]">
        <ToolButton label="最小化">
          <Icon>
            <path d="M2.500 5l5.500 6 5.500-6" stroke="currentColor" />
          </Icon>
        </ToolButton>
        <ToolButton label="最大化">
          <Icon>
            <path d="M8 2.500l5.500 5.500L8 13.500 2.500 8z" stroke="currentColor" />
          </Icon>
        </ToolButton>
        <ToolButton label="关闭">
          <Icon>
            <circle cx="8" cy="8" r="6.300" fill="currentColor" />
            <path d="M5.500 5.500l5 5M10.500 5.500l-5 5" stroke="#f5f4f2" strokeWidth="1.300" />
          </Icon>
        </ToolButton>
      </div>
    </header>
  );
}

function Toolbar() {
  return (
    <div className="flex h-[37px] items-center pb-[2px] pl-px">
      <Grip />
      <ToolButton label="新建" className="ml-[11px] gap-[9px]">
        <NewWindowIcon />
        <Caret />
      </ToolButton>
      <ToolButton label="打开" className="ml-[10px]">
        <OpenFolderIcon />
      </ToolButton>
      <ToolButton label="保存" className="ml-[12px] mr-[9px]">
        <SaveIcon />
      </ToolButton>
      <Grip />
      <ToolButton label="服务" className="ml-[11px] gap-[9px]">
        <ServerIcon />
        <Caret />
      </ToolButton>
      <ToolButton label="调试" className="ml-[9px] mr-[9px] gap-[9px]">
        <BugIcon />
        <Caret />
      </ToolButton>
      <Grip />
      <ToolButton label="模型仓库" className="ml-[11px]">
        <ShopIcon />
      </ToolButton>
      <ToolButton label="搜索" className="ml-auto mr-[19px] text-[#707070]">
        <MagnifierIcon />
      </ToolButton>
    </div>
  );
}

function StatusBar() {
  return (
    <footer className="flex h-[31px] items-center border-t border-[#d6d0cb]">
      <div className="ml-auto mr-[318px] flex h-full items-center">
        <Grip />
        <div className="ml-[2px] flex h-full w-[155px] items-center justify-center whitespace-nowrap border-r border-t border-[#a0a0a0] bg-[linear-gradient(to_right,#a0a0a0_65px,#f5f4f2_65px)] pl-2 text-[15px] text-[#333]">
          93兆（共 220兆）
        </div>
        <ToolButton label="运行垃圾回收">
          <TrashIcon />
        </ToolButton>
        <Grip />
      </div>
    </footer>
  );
}

export default function App() {
  return (
    <div className="flex min-h-screen flex-col bg-[#f5f4f2] font-['Noto_Sans','Noto_Sans_CJK_SC',sans-serif] text-black">
      <svg width="0" height="0" className="absolute" aria-hidden="true">
        <pattern id="checker" width="2" height="2" patternUnits="userSpaceOnUse">
          <path d="M0 0h2v2H0z" fill="#e8e8e8" />
          <path d="M0 0h1v1H0zM1 1h1v1H1z" fill="#111" />
        </pattern>
      </svg>
      <TitleBar />
      <nav className="flex h-[31px] items-center gap-4 border-b border-[#dcdad7] pl-2 pt-[2px] text-[15px] text-[#929595]">
        <button type="button">文件</button>
        <button type="button">编辑</button>
        <button type="button">视图</button>
        <button type="button">帮助</button>
      </nav>
      <Toolbar />
      <main className="flex flex-1 gap-1">
        <div className="grid w-[402px] shrink-0 grid-rows-[508fr_431fr] gap-1">
          <ProjectPane />
          <ServerPane />
        </div>
        <div className="grid min-w-0 flex-1 grid-rows-[677fr_262fr] gap-1">
          <EditorPane />
          <ConsolePane />
        </div>
      </main>
      <StatusBar />
    </div>
  );
}
